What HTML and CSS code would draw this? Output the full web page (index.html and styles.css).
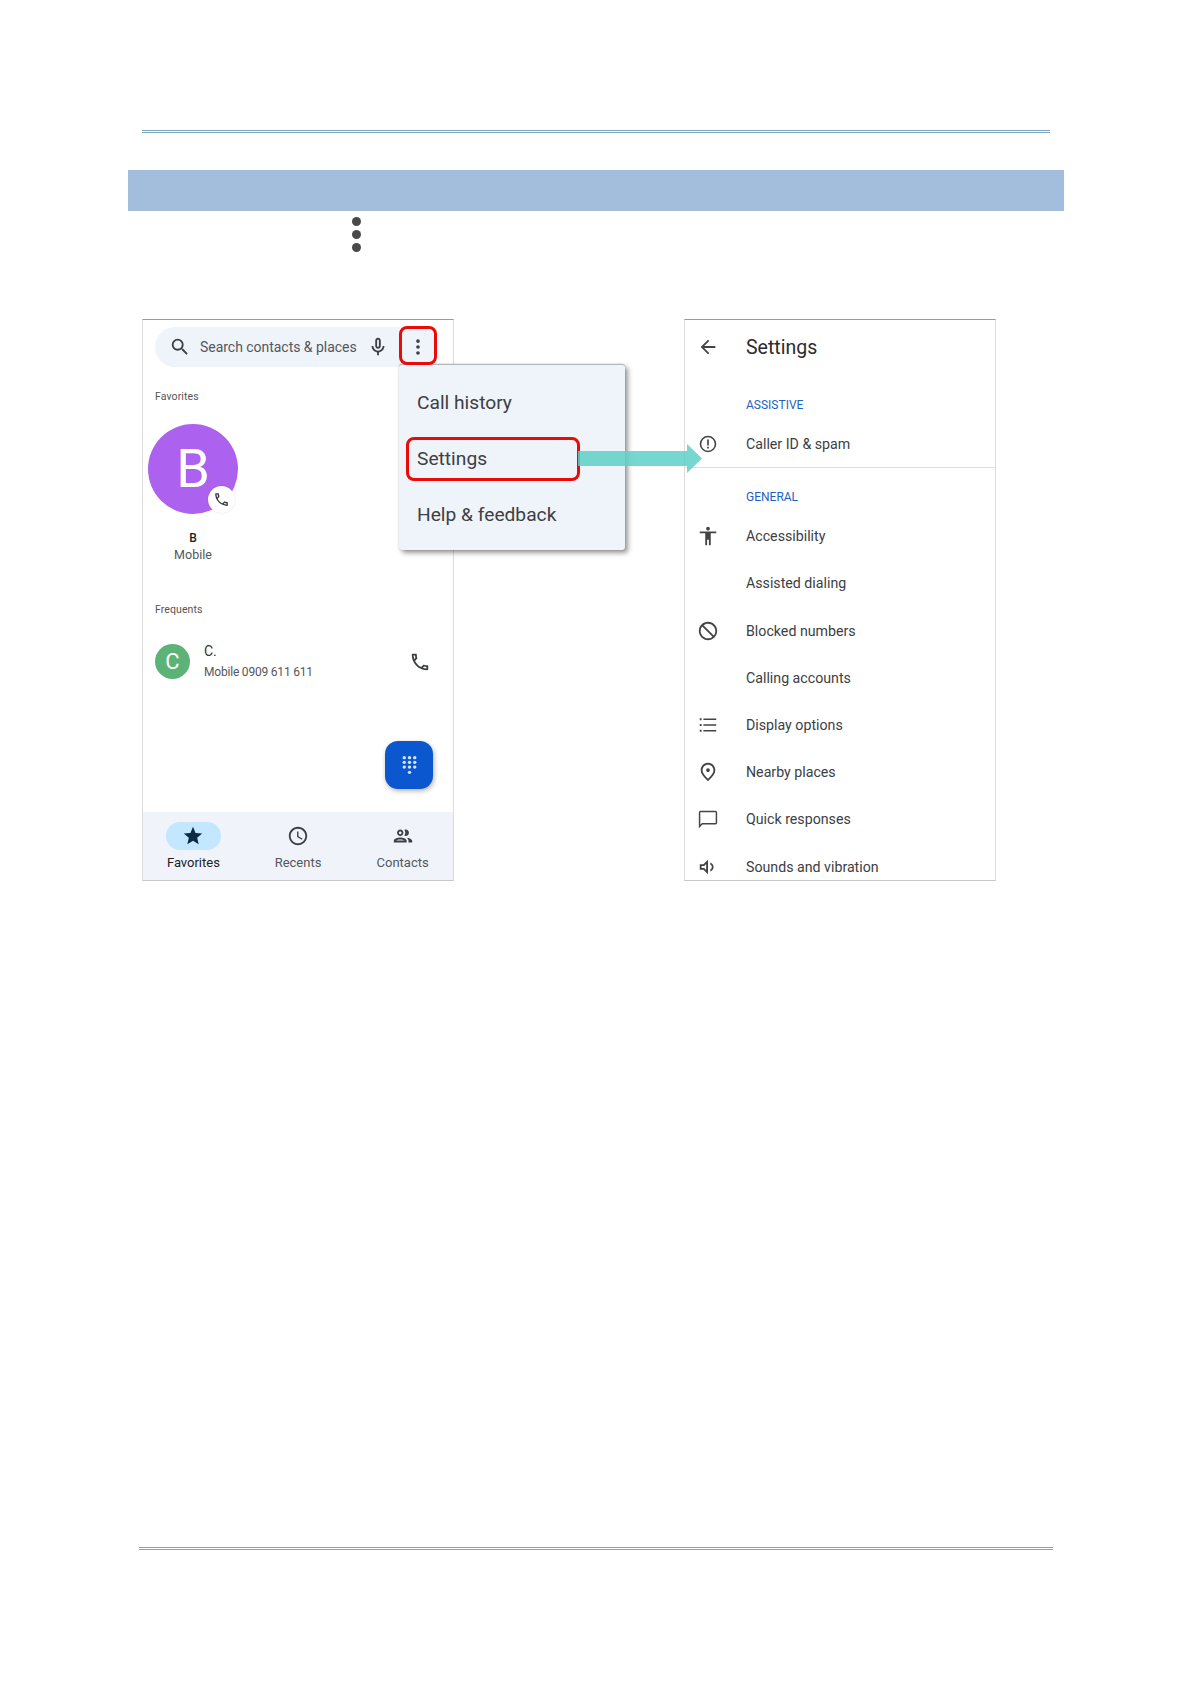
FILE: index.html
```html
<!DOCTYPE html>
<html lang="en">
<head>
<meta charset="utf-8">
<title>Phone settings</title>
<link rel="stylesheet" href="styles.css">
</head>
<body>
<div class="page">
  <div class="rule rule-top"></div>
  <div class="band"></div>
  <div class="kebab-line">
    <svg class="kebab-big" viewBox="0 0 9 35"><circle cx="4.5" cy="4.5" r="4.5"/><circle cx="4.5" cy="17.5" r="4.5"/><circle cx="4.5" cy="30.5" r="4.5"/></svg>
  </div>
  <div class="figure">
    <section class="phone phone-left">
      <div class="search">
        <svg class="ic ic-search" viewBox="0 0 24 24"><path d="M15.5 14h-.79l-.28-.27A6.471 6.471 0 0 0 16 9.5 6.5 6.5 0 1 0 9.5 16c1.61 0 3.09-.59 4.23-1.57l.27.28v.79l5 4.99L20.49 19l-4.99-5zm-6 0C7.01 14 5 11.99 5 9.5S7.01 5 9.5 5 14 7.01 14 9.5 11.99 14 9.5 14z"/></svg>
        <span class="search-text">Search contacts &amp; places</span>
        <svg class="ic ic-mic" viewBox="0 0 24 24"><path d="M12 14c1.66 0 3-1.34 3-3V5c0-1.66-1.34-3-3-3S9 3.34 9 5v6c0 1.66 1.34 3 3 3zm-1-9c0-.55.45-1 1-1s1 .45 1 1v6c0 .55-.45 1-1 1s-1-.45-1-1V5z"/><path d="M17 11c0 2.76-2.24 5-5 5s-5-2.24-5-5H5c0 3.53 2.61 6.43 6 6.92V21h2v-3.08c3.39-.49 6-3.39 6-6.92h-2z"/></svg>
        <svg class="ic ic-more" viewBox="0 0 24 24"><circle cx="12" cy="5.500" r="2"/><circle cx="12" cy="12" r="2"/><circle cx="12" cy="18.500" r="2"/></svg>
      </div>
      <div class="caption caption-fav">Favorites</div>
      <div class="fav">
        <div class="avatar-big">B
          <span class="badge">
            <svg viewBox="0 0 24 24"><path d="M6.54 5c.06.89.21 1.76.45 2.59l-1.2 1.2c-.41-1.2-.67-2.47-.76-3.79h1.51m9.86 12.02c.85.24 1.72.39 2.6.45v1.49c-1.32-.09-2.59-.35-3.8-.75l1.2-1.19M7.5 3H4c-.55 0-1 .45-1 1 0 9.39 7.61 17 17 17 .55 0 1-.45 1-1v-3.49c0-.55-.45-1-1-1-1.24 0-2.45-.2-3.57-.57-.1-.04-.21-.05-.31-.05-.26 0-.51.1-.71.29l-2.2 2.2c-2.83-1.45-5.15-3.76-6.59-6.59l2.2-2.2c.28-.28.36-.67.25-1.02C8.7 6.45 8.5 5.25 8.5 4c0-.55-.45-1-1-1z"/></svg>
          </span>
        </div>
        <div class="fav-name">B</div>
        <div class="fav-type">Mobile</div>
      </div>
      <div class="caption caption-freq">Frequents</div>
      <div class="contact">
        <div class="avatar-small">C</div>
        <div class="contact-text">
          <div class="contact-name">C.</div>
          <div class="contact-num">Mobile 0909 611 611</div>
        </div>
        <svg class="ic ic-call" viewBox="0 0 24 24"><path d="M6.54 5c.06.89.21 1.76.45 2.59l-1.2 1.2c-.41-1.2-.67-2.47-.76-3.79h1.51m9.86 12.02c.85.24 1.72.39 2.6.45v1.49c-1.32-.09-2.59-.35-3.8-.75l1.2-1.19M7.5 3H4c-.55 0-1 .45-1 1 0 9.39 7.61 17 17 17 .55 0 1-.45 1-1v-3.49c0-.55-.45-1-1-1-1.24 0-2.45-.2-3.57-.57-.1-.04-.21-.05-.31-.05-.26 0-.51.1-.71.29l-2.2 2.2c-2.83-1.45-5.15-3.76-6.59-6.59l2.2-2.2c.28-.28.36-.67.25-1.02C8.7 6.45 8.5 5.25 8.5 4c0-.55-.45-1-1-1z"/></svg>
      </div>
      <div class="fab-row">
        <div class="fab">
          <svg viewBox="0 0 16 20"><g><circle cx="3" cy="2.500" r="1.600"/><circle cx="8" cy="2.500" r="1.600"/><circle cx="13" cy="2.500" r="1.600"/><circle cx="3" cy="7" r="1.600"/><circle cx="8" cy="7" r="1.600"/><circle cx="13" cy="7" r="1.600"/><circle cx="3" cy="11.500" r="1.600"/><circle cx="8" cy="11.500" r="1.600"/><circle cx="13" cy="11.500" r="1.600"/><circle cx="8" cy="16.500" r="1.600"/></g></svg>
        </div>
      </div>
      <nav class="tabs">
        <div class="tab tab-active">
          <span class="pill"><svg class="ic ic-tab" viewBox="0 0 24 24"><path d="M12 17.27L18.18 21l-1.64-7.03L22 9.24l-7.19-.61L12 2 9.19 8.63 2 9.24l5.46 4.73L5.82 21z"/></svg></span>
          <span class="tab-label">Favorites</span>
        </div>
        <div class="tab">
          <span class="pill pill-off"><svg class="ic ic-tab" viewBox="0 0 24 24"><path d="M11.99 2C6.47 2 2 6.48 2 12s4.47 10 9.99 10C17.52 22 22 17.52 22 12S17.52 2 11.99 2zM12 20c-4.42 0-8-3.58-8-8s3.58-8 8-8 8 3.58 8 8-3.58 8-8 8zm.5-13H11v6l5.25 3.15.75-1.23-4.5-2.67z"/></svg></span>
          <span class="tab-label">Recents</span>
        </div>
        <div class="tab">
          <span class="pill pill-off"><svg class="ic ic-tab" viewBox="0 0 24 24"><path d="M9 13.75c-2.34 0-7 1.17-7 3.5V19h14v-1.75c0-2.33-4.66-3.5-7-3.5zM4.34 17c.84-.58 2.87-1.25 4.66-1.25s3.82.67 4.66 1.25H4.34zM9 12c1.93 0 3.5-1.57 3.5-3.5S10.93 5 9 5 5.5 6.57 5.5 8.5 7.07 12 9 12zm0-5c.83 0 1.5.67 1.5 1.5S9.83 10 9 10s-1.5-.67-1.5-1.5S8.17 7 9 7zm7.04 6.81c1.16.84 1.96 1.96 1.96 3.44V19h4v-1.75c0-2.02-3.5-3.17-5.96-3.44zM15 12c1.93 0 3.5-1.57 3.5-3.5S16.93 5 15 5c-.54 0-1.04.13-1.5.35.63.89 1 1.98 1 3.15s-.37 2.26-1 3.15c.46.22.96.35 1.5.35z"/></svg></span>
          <span class="tab-label">Contacts</span>
        </div>
      </nav>
    </section>

    <section class="phone phone-right">
      <header class="set-head">
        <svg class="ic ic-set" viewBox="0 0 24 24"><path d="M20 11H7.83l5.59-5.59L12 4l-8 8 8 8 1.41-1.41L7.83 13H20v-2z"/></svg>
        <span class="set-title">Settings</span>
      </header>
      <div class="set-label set-label-first">ASSISTIVE</div>
      <div class="set-row">
        <svg class="ic ic-set" viewBox="0 0 24 24"><path fill-rule="evenodd" d="M12 3a9 9 0 1 0 0 18 9 9 0 0 0 0-18zm0 1.700a7.300 7.300 0 1 1 0 14.600 7.300 7.300 0 0 1 0-14.600z"/><path d="M11.100 7h1.800v6.500h-1.800zM11.100 15h1.800v2h-1.800z"/></svg>
        <span>Caller ID &amp; spam</span>
      </div>
      <div class="set-divider"></div>
      <div class="set-label set-label-second">GENERAL</div>
      <div class="set-row">
        <svg class="ic ic-set" viewBox="0 0 24 24"><path d="M12 2c1.100 0 2 .9 2 2s-.9 2-2 2-2-.9-2-2 .9-2 2-2zm9 7h-6v13h-2v-6h-2v6H9V9H3V7h18v2z"/></svg>
        <span>Accessibility</span>
      </div>
      <div class="set-row">
        <span class="ic ic-set"></span>
        <span>Assisted dialing</span>
      </div>
      <div class="set-row">
        <svg class="ic ic-set" viewBox="0 0 24 24"><path transform="translate(24 0) scale(-1 1)" d="M12 2C6.48 2 2 6.48 2 12s4.48 10 10 10 10-4.48 10-10S17.52 2 12 2zM4 12c0-4.42 3.58-8 8-8 1.85 0 3.55.63 4.9 1.69L5.69 16.9C4.63 15.55 4 13.85 4 12zm8 8c-1.85 0-3.55-.63-4.9-1.69L18.31 7.1C19.37 8.45 20 10.15 20 12c0 4.42-3.58 8-8 8z"/></svg>
        <span>Blocked numbers</span>
      </div>
      <div class="set-row">
        <span class="ic ic-set"></span>
        <span>Calling accounts</span>
      </div>
      <div class="set-row">
        <svg class="ic ic-set" viewBox="0 0 24 24"><path d="M3 4.700h2v2H3zM3 11h2v2H3zM3 17.300h2v2H3zM7 4.900h14v1.600H7zM7 11.200h14v1.600H7zM7 17.500h14v1.600H7z"/></svg>
        <span>Display options</span>
      </div>
      <div class="set-row">
        <svg class="ic ic-set" viewBox="0 0 24 24"><path d="M12 12c-1.100 0-2-.9-2-2s.9-2 2-2 2 .9 2 2-.9 2-2 2zm6-1.800C18 6.570 15.350 4 12 4s-6 2.570-6 6.200c0 2.340 1.950 5.440 6 9.140 4.050-3.700 6-6.800 6-9.140zM12 2c4.200 0 8 3.220 8 8.200 0 3.320-2.670 7.250-8 11.800-5.330-4.550-8-8.480-8-11.800C4 5.220 7.800 2 12 2z"/></svg>
        <span>Nearby places</span>
      </div>
      <div class="set-row">
        <svg class="ic ic-set" viewBox="0 0 24 24"><path d="M20 3H4c-1.100 0-2 .9-2 2v17l4-4h14c1.100 0 2-.9 2-2V5c0-1.100-.9-2-2-2zm.4 13.400H5.400l-1.800 1.800V4.600h16.800v11.800z"/></svg>
        <span>Quick responses</span>
      </div>
      <div class="set-row">
        <svg class="ic ic-set" viewBox="0 0 24 24"><path fill-rule="evenodd" d="M3 9v6h4l5 5V4L7 9H3zm7-.17v6.340L7.830 13H5v-2h2.830L10 8.830z"/><path d="M14.500 7.200v2.100c1 .6 1.700 1.600 1.700 2.700s-.7 2.100-1.700 2.700v2.100c2.100-.8 3.600-2.600 3.600-4.800s-1.500-4-3.600-4.800z"/></svg>
        <span>Sounds and vibration</span>
      </div>
    </section>

    <div class="menu">
      <div class="menu-item">Call history</div>
      <div class="menu-item">Settings</div>
      <div class="menu-item">Help &amp; feedback</div>
    </div>
    <div class="mark mark-more"></div>
    <div class="mark mark-settings"></div>
    <svg class="arrow" viewBox="0 0 124 29"><path d="M0 7h109V0l15 14.500L109 29v-7H0z"/></svg>
  </div>
  <div class="rule rule-bottom"></div>
</div>
</body>
</html>
```

FILE: styles.css
```css
* { box-sizing: border-box; }
html, body { margin: 0; padding: 0; background: #fff; }
body { font-family: Roboto, "Liberation Sans", sans-serif; color: #3c4043; }

.page { width: 1191px; height: 1683px; padding-top: 130px; overflow: hidden; }

.rule { height: 3px; border-top: 3px double #7fa6bf; }
.rule-top { margin-left: 142px; width: 908px; }
.rule-bottom { margin-left: 139px; width: 914px; margin-top: 666px; }

.band { margin: 37px 0 0 128px; width: 936px; height: 41px; background: #a3bedd; }

.kebab-line { height: 108px; padding: 6px 0 0 352px; }
.kebab-big { display: block; width: 9px; height: 35px; fill: #4a4a4a; }

.figure { position: relative; display: flex; gap: 230px; margin-left: 142px; }

.phone { width: 312px; height: 562px; background: #fff; overflow: hidden; display: flex; flex-direction: column;
  border: 1px solid #dcdcdc; border-top-color: #9a9a9a; border-bottom-color: #c8c8c8; }
.phone > * { flex: none; }

.ic { display: block; fill: #3c4043; flex: none; }

/* left phone */
.search { display: flex; align-items: center; height: 40px; margin: 7px 15px 0 12px; padding-left: 14px; border-radius: 20px; background: #eff3fa; }
.ic-search { width: 22px; height: 22px; }
.search-text { margin-left: 9px; width: 167px; font-size: 14px; white-space: nowrap; color: #54575b; letter-spacing: -.03px; }
.ic-mic { width: 22px; height: 22px; }
.ic-more { width: 22px; height: 22px; margin-left: 18px; }

.caption { font-size: 10.500px; line-height: 14px; padding-left: 12px; color: #555; letter-spacing: .1px; }
.caption-fav { margin-top: 23px; }

.fav { margin: 20px 0 0 5px; width: 90px; display: flex; flex-direction: column; align-items: center; }
.avatar-big { position: relative; width: 90px; height: 90px; border-radius: 50%; background: #ad62ef; color: #fff;
  display: flex; align-items: center; justify-content: center; font-size: 54px; line-height: 1; }
.badge { position: absolute; left: 60px; top: 62px; width: 27px; height: 27px; border-radius: 50%; background: #fff;
  display: flex; align-items: center; justify-content: center; box-shadow: 0 0 2px rgba(0,0,0,.15); }
.badge svg { width: 17px; height: 17px; fill: #3c4043; }
.fav-name { margin-top: 16px; font-size: 12px; line-height: 16px; font-weight: 500; color: #222; }
.fav-type { font-size: 12.500px; line-height: 18px; color: #54575b; }

.caption-freq { margin-top: 39px; }

.contact { display: flex; align-items: center; margin: 27px 0 0 12px; height: 35px; }
.avatar-small { width: 35px; height: 35px; border-radius: 50%; background: #5db377; color: #fff; font-size: 22px;
  display: flex; align-items: center; justify-content: center; }
.contact-text { margin-left: 14px; width: 202px; }
.contact-name { font-size: 14px; line-height: 18px; color: #333; }
.contact-num { font-size: 12px; line-height: 20px; color: #54575b; margin-top: 2px; letter-spacing: -.2px; }
.ic-call { width: 22px; height: 22px; margin-left: 3px; }

.fab-row { display: flex; justify-content: flex-end; padding-right: 20px; margin-top: 62px; }
.fab { width: 48px; height: 48px; border-radius: 13px; background: #0b57cf; box-shadow: 1px 2px 5px rgba(0,0,0,.3);
  display: flex; align-items: center; justify-content: center; }
.fab svg { width: 17px; height: 21px; fill: #d8e6fb; }

.tabs { display: flex; justify-content: center; height: 68px; margin-top: auto; background: #f0f4fa; padding-top: 10px; }
.tab { flex: 0 0 104.600px; display: flex; flex-direction: column; align-items: center; }
.pill { width: 55px; height: 28px; border-radius: 14px; background: #c2e7ff; display: flex; align-items: center; justify-content: center; }
.pill-off { background: transparent; }
.ic-tab { width: 22px; height: 22px; }
.tab-active .ic-tab { fill: #0b2a45; }
.tab-label { margin-top: 4px; font-size: 13px; line-height: 17px; color: #54575b; }
.tab-active .tab-label { color: #222; }

/* right phone */
.set-head { display: flex; align-items: center; height: 54px; padding-left: 12px; }
.ic-set { width: 22px; height: 22px; fill: #444; }
.set-title { margin-left: 27px; font-size: 19.500px; color: #2b2b2b; }
.set-label { padding-left: 61px; font-size: 12px; line-height: 24px; color: #1f5fbf; }
.set-label-first { margin: 19px 0 3px; }
.set-label-second { margin: 16.500px 0 4px; }
.set-row { display: flex; align-items: center; height: 47.200px; padding-left: 12px; font-size: 14.200px; color: #3c4043; }
.set-row span:last-child { margin-left: 27px; }
.set-divider { height: 1px; background: #dedede; }

/* overlays */
.menu { position: absolute; left: 257px; top: 45px; width: 226px; height: 186px; padding-top: 10px; border-radius: 3px;
  background: #eff3fa; border-top: 1px solid #b5b5b5; box-shadow: 3px 3px 5px rgba(0,0,0,.4), 0 0 2px rgba(0,0,0,.2); }
.menu-item { height: 56px; line-height: 56px; padding-left: 18px; font-size: 19.200px; color: #3c4043; }
.mark { position: absolute; border: 3.500px solid #ea0a0a; }
.mark-more { left: 257px; top: 7px; width: 38px; height: 39px; border-radius: 8px; }
.mark-settings { left: 264px; top: 118px; width: 174px; height: 44px; border-radius: 8px; }
.arrow { position: absolute; left: 436px; top: 125px; width: 124px; height: 29px; fill: #5fd0c8; opacity: .85; }
```
